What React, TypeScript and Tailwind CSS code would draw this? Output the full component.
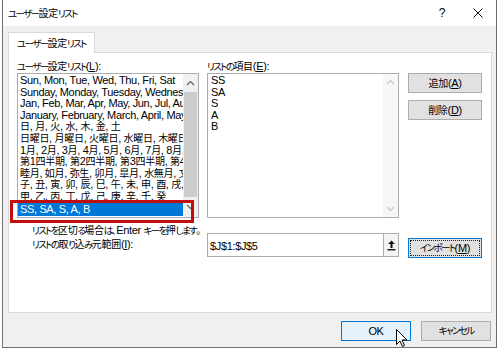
import React from 'react';

const presetLists = [
  'Sun, Mon, Tue, Wed, Thu, Fri, Sat',
  'Sunday, Monday, Tuesday, Wednesday, Thursday, Friday, Saturday',
  'Jan, Feb, Mar, Apr, May, Jun, Jul, Aug, Sep, Oct, Nov, Dec',
  'January, February, March, April, May, June, July, August, September, October, November, December',
  '日, 月, 火, 水, 木, 金, 土',
  '日曜日, 月曜日, 火曜日, 水曜日, 木曜日, 金曜日, 土曜日',
  '1月, 2月, 3月, 4月, 5月, 6月, 7月, 8月, 9月, 10月, 11月, 12月',
  '第1四半期, 第2四半期, 第3四半期, 第4四半期',
  '睦月, 如月, 弥生, 卯月, 皐月, 水無月, 文月, 葉月, 長月, 神無月, 霜月, 師走',
  '子, 丑, 寅, 卯, 辰, 巳, 午, 未, 申, 酉, 戌, 亥',
  '甲, 乙, 丙, 丁, 戊, 己, 庚, 辛, 壬, 癸',
];

const entries = ['SS', 'SA', 'S', 'A', 'B'];

const KANA = /^[\u3040-\u30ff]/;

// Japanese runs: kanji at 10px, kana squeezed to the narrow widths of Meiryo UI
const J = ({ t }: { t: string }) => (
  <>
    {t.split(/([\u3040-\u30ff]+|[\u3000-\u303f\u4e00-\u9fff\uff01-\uff5e]+)/).map((s, i) =>
      i % 2 ? (
        <span key={i} className={KANA.test(s) ? 'text-[9.5px] tracking-[-1.6px]' : 'text-[10px] tracking-[-0.3px]'}>
          {s}
        </span>
      ) : (
        s
      )
    )}
  </>
);

const Chevron = ({ up, color }: { up?: boolean; color: string }) => (
  <svg width="9" height="6" viewBox="0 0 9 6" fill="none">
    <path d={up ? 'M1 5 L4.5 1.5 L8 5' : 'M1 1 L4.5 4.5 L8 1'} stroke={color} strokeWidth="1.2" />
  </svg>
);

// Windows-style push button
const DlgButton = ({ children, className = '' }: { children: React.ReactNode; className?: string }) => (
  <div className={`flex items-center justify-center h-[20px] whitespace-nowrap border ${className}`}>
    {children}
  </div>
);

const App: React.FC = () => {
  return (
    <div className="relative w-[500px] h-[351px] bg-white overflow-hidden text-black font-['Liberation_Sans','Noto_Sans_CJK_JP',sans-serif] [font-feature-settings:'palt'] text-[11px] tracking-[-0.35px] whitespace-nowrap">
      <div className="ml-[2px] w-[495px] h-[348px] border-x border-b border-[#6e6e6e] flex flex-col">
        {/* Title bar */}
        <div className="h-[26px] bg-white flex items-center pl-[5px] shrink-0">
          <span className="leading-none">
            <J t="ユーザー設定リスト" />
          </span>
          <div className="ml-auto flex items-center">
            <span className="w-[36px] text-center text-[12px] leading-none">?</span>
            <span className="w-[36px] flex justify-center">
              <svg width="10" height="10" viewBox="0 0 10 10">
                <path d="M0.5 0.5 L9.5 9.5 M9.5 0.5 L0.5 9.5" stroke="#111" strokeWidth="1" />
              </svg>
            </span>
          </div>
        </div>

        {/* Body */}
        <div className="flex-1 bg-[#f0f0f0] pt-[6px] pl-[5px] pr-[4px] flex flex-col">
          <div className="relative z-10 -mb-px w-[87px] h-[21px] bg-white border border-b-0 border-[#d9d9d9] pl-[8px] pt-[3px] leading-[14px]">
            <J t="ユーザー設定リスト" />
          </div>
          <div className="h-[261px] bg-white border border-[#d9d9d9] pl-[8px] pt-[7px]">
            <div className="flex">
              {/* Left column */}
              <div className="w-[182px]">
                <div className="h-[13px] leading-[13px]">
                  <J t="ユーザー設定リスト" />(<span className="underline">L</span>):
                </div>
                <div className="h-[145px] border border-[#acacac] flex">
                  <div className="flex-1 overflow-hidden pt-px">
                    {presetLists.map((t) => (
                      <div key={t} className="h-[11.6px] leading-[11.6px] pl-[2px] overflow-hidden">
                        <J t={t} />
                      </div>
                    ))}
                    <div className="h-[13px] leading-[13px] pl-[2px] bg-[#0078d7] text-white">SS, SA, S, A, B</div>
                  </div>
                  <div className="w-[15px] bg-[#f0f0f0] flex flex-col items-center">
                    <div className="h-[18px] flex items-center justify-center">
                      <Chevron up color="#606060" />
                    </div>
                    <div className="w-[13px] h-[105px] bg-[#cdcdcd]" />
                    <div className="flex-1 flex items-center justify-center">
                      <Chevron color="#606060" />
                    </div>
                  </div>
                </div>
              </div>

              {/* Right list */}
              <div className="w-[192px] ml-[8px]">
                <div className="h-[13px] leading-[13px]">
                  <J t="リストの項目" />(<span className="underline">E</span>):
                </div>
                <div className="h-[145px] border border-[#acacac] flex">
                  <div className="flex-1 pt-px">
                    {entries.map((t) => (
                      <div key={t} className="h-[11.6px] leading-[11.6px] pl-[3px]">
                        {t}
                      </div>
                    ))}
                  </div>
                  <div className="w-[15px] bg-[#f7f7f7] flex flex-col items-center justify-between py-[5px]">
                    <Chevron up color="#c4c4c4" />
                    <Chevron color="#c4c4c4" />
                  </div>
                </div>
              </div>

              {/* Buttons */}
              <div className="w-[74px] ml-[9px] pt-[13px] flex flex-col gap-[7px]">
                <DlgButton className="bg-[#e1e1e1] border-[#adadad]">
                  <J t="追加" />(<span className="underline">A</span>)
                </DlgButton>
                <DlgButton className="bg-[#e1e1e1] border-[#adadad]">
                  <J t="削除" />(<span className="underline">D</span>)
                </DlgButton>
              </div>
            </div>

            {/* Import row */}
            <div className="flex items-start">
              <div className="w-[182px] pl-[15px] pt-[6px]">
                <div className="h-[13px] leading-[13px]">
                  <J t="リストを区切る場合は、Enter キーを押します。" />
                </div>
                <div className="h-[13px] leading-[13px] mt-px">
                  <J t="リストの取り込み元範囲" />(<span className="underline">I</span>):
                </div>
              </div>
              <div className="ml-[8px] mt-[15px] w-[192px] h-[24px] border border-[#acacac] flex">
                <div className="flex-1 pl-[2px] pt-[5px] leading-[14px]">$J$1:$J$5</div>
                <div className="w-[15px] border-l border-[#adadad] bg-[#f4f4f4] flex items-center justify-center">
                  <svg width="9" height="11" viewBox="0 0 9 11">
                    <path d="M4.5 0.5 L8 4 L5.5 4 L5.5 8 L3.5 8 L3.5 4 L1 4 Z" fill="#111" />
                    <rect x="0.5" y="9" width="8" height="1.4" fill="#111" />
                  </svg>
                </div>
              </div>
              <div className="ml-[9px] mt-[20px] w-[74px] h-[20px] border border-[#0078d7] bg-[#e1e1e1] p-px">
                <div className="h-full border border-dotted border-[#222] flex items-center justify-center leading-none">
                  <J t="インポート" />(<span className="underline">M</span>)
                </div>
              </div>
            </div>
          </div>

          {/* Footer buttons */}
          <div className="flex justify-end gap-[10px] mt-[8px] pr-px">
            <DlgButton className="w-[70px] bg-[#e5f1fb] border-[#0078d7]">OK</DlgButton>
            <DlgButton className="w-[70px] bg-[#e1e1e1] border-[#adadad]">
              <J t="キャンセル" />
            </DlgButton>
          </div>
        </div>
      </div>

      {/* Red annotation around the selected list */}
      <div className="absolute left-[10px] top-[200px] w-[184px] h-[23px] border-[3px] border-[#c00d0d]" />

      {/* Mouse pointer */}
      <svg className="absolute left-[396px] top-[329px]" width="12" height="19" viewBox="0 0 12 19">
        <path d="M0.5 0.5 L0.5 15.5 L4 12 L6.5 17.5 L8.5 16.5 L6 11 L11 11 Z" fill="white" stroke="black" strokeWidth="1" strokeLinejoin="round" />
      </svg>
    </div>
  );
};

export default App;
